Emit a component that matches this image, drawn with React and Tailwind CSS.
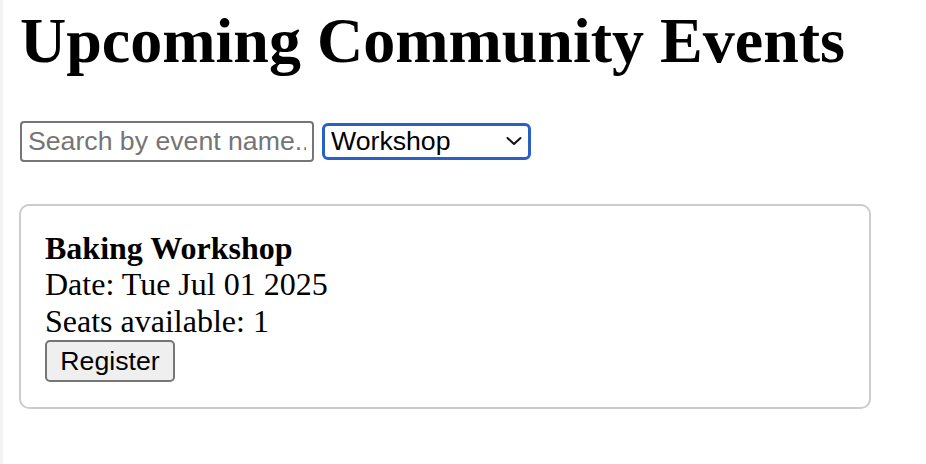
export default function App() {
  return (
    <div className="min-h-screen bg-white border-l-[3px] border-[#f3f3f3] pl-[16px] pt-[4px] font-['Liberation_Serif',serif] text-black">
      <h1 className="pl-[1px] text-[64px] font-bold leading-[73.5px] mb-[43px]">Upcoming Community Events</h1>
      <div className="flex items-center gap-[8px] pl-[1px] font-['Liberation_Sans',Arial,sans-serif]">
        <input
          type="text"
          placeholder="Search by event name..."
          className="w-[294px] h-[41px] border-2 border-[#767676] rounded-[4px] px-[6px] text-[26.67px] text-black placeholder:text-[#757575] outline-none"
        />
        <div className="w-[209px] h-[37px] border-[3px] border-[#2a5fc8] rounded-[6px] flex items-center justify-between pl-[6px] pr-[6px] text-[26.67px] text-black">
          <span className="leading-none">Workshop</span>
          <svg width="16" height="10" viewBox="0 0 16 10" fill="none" stroke="#111" strokeWidth="2" strokeLinecap="round" strokeLinejoin="round">
            <path d="M1.5 2 L8 8 L14.5 2" />
          </svg>
        </div>
      </div>
      <div className="mt-[42px] w-[852px] border-2 border-[#cccccc] rounded-[10px] px-[24px] pt-[24px] pb-[25px] text-[32px] leading-[36.8px]">
        <div className="font-bold">Baking Workshop</div>
        <div>Date: Tue Jul 01 2025</div>
        <div>Seats available: 1</div>
        <button className="h-[42px] w-[130px] border-2 border-[#767676] bg-[#efefef] rounded-[5px] text-[26.67px] leading-none font-['Liberation_Sans',Arial,sans-serif] text-black">
          Register
        </button>
      </div>
    </div>
  );
}
